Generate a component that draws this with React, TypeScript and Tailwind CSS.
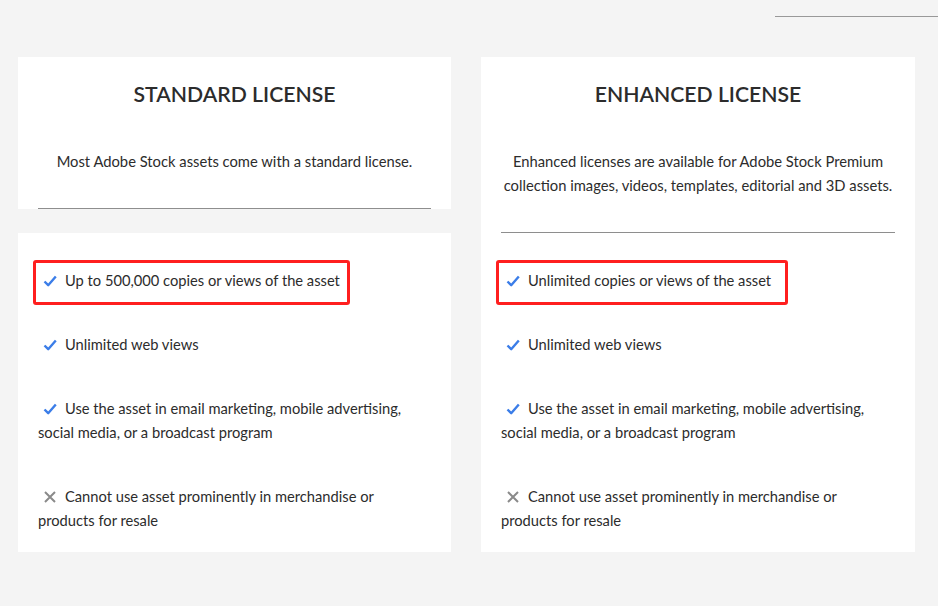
import type { ReactNode } from 'react'

type Item = { ok: boolean; text: string; mark?: number }

const standard: Item[] = [
  { ok: true, text: 'Up to 500,000 copies or views of the asset', mark: 317 },
  { ok: true, text: 'Unlimited web views' },
  { ok: true, text: 'Use the asset in email marketing, mobile advertising, social media, or a broadcast program' },
  { ok: false, text: 'Cannot use asset prominently in merchandise or products for resale' },
]

const enhanced: Item[] = [
  { ok: true, text: 'Unlimited copies or views of the asset', mark: 292 },
  { ok: true, text: 'Unlimited web views' },
  { ok: true, text: 'Use the asset in email marketing, mobile advertising, social media, or a broadcast program' },
  { ok: false, text: 'Cannot use asset prominently in merchandise or products for resale' },
]

function Check() {
  return (
    <svg width="14" height="14" viewBox="0 0 14 14" className="inline-block ml-[5px] mr-[8px] -mt-[2px] align-middle">
      <path d="M1.5 7.5 L5.2 11.2 L12.8 2.5" fill="none" stroke="#3b7de8" strokeWidth="2.4" strokeLinejoin="round" />
    </svg>
  )
}

function Cross() {
  return (
    <svg width="14" height="14" viewBox="0 0 14 14" className="inline-block ml-[5px] mr-[8px] -mt-[2px] align-middle">
      <path d="M2 2 L12 12 M12 2 L2 12" fill="none" stroke="#8a8a8a" strokeWidth="2" />
    </svg>
  )
}

function Header({ title, children }: { title: string; children: ReactNode }) {
  return (
    <div className="bg-white pt-[23px]">
      <h2 className="text-center text-[21.2px] leading-[28px] font-semibold text-[#2c2c2c]">{title}</h2>
      <p className="mt-[41px] px-3 text-center text-[14.75px] leading-[24px] text-[#2c2c2c]">{children}</p>
      <div className="mx-5 mt-[35px] border-t border-[#8e8e8e]" />
    </div>
  )
}

function List({ items }: { items: Item[] }) {
  return (
    <div className="bg-white pl-5 pr-8 pt-[35px] pb-5 flex flex-col gap-10">
      {items.map((it, i) => (
        <p key={i} className="relative text-[14.7px] leading-[24px] text-[#2c2c2c]">
          {it.ok ? <Check /> : <Cross />}
          {it.text}
          {it.mark && (
            <span
              className="absolute left-[-5px] top-[-8px] h-[45px] border-[3px] border-[#ff1f1f] rounded-[3px]"
              style={{ width: it.mark }}
            />
          )}
        </p>
      ))}
    </div>
  )
}

export default function App() {
  return (
    <div className="w-[938px] h-[606px] bg-[#f4f4f4] relative overflow-hidden" style={{ fontFamily: 'Lato, "Open Sans", sans-serif' }}>
      <div className="flex justify-end pt-4">
        <div className="w-[163px] border-t border-[#999]" />
      </div>
      <div className="grid grid-cols-[433px_434px] gap-x-[30px] pl-[18px] pt-[40px]">
        <div className="flex flex-col">
          <Header title="STANDARD LICENSE">Most Adobe Stock assets come with a standard license.</Header>
          <div className="h-6" />
          <List items={standard} />
        </div>
        <div className="flex flex-col">
          <Header title="ENHANCED LICENSE">
            Enhanced licenses are available for Adobe Stock Premium collection images, videos, templates, editorial and 3D assets.
          </Header>
          <List items={enhanced} />
        </div>
      </div>
    </div>
  )
}
